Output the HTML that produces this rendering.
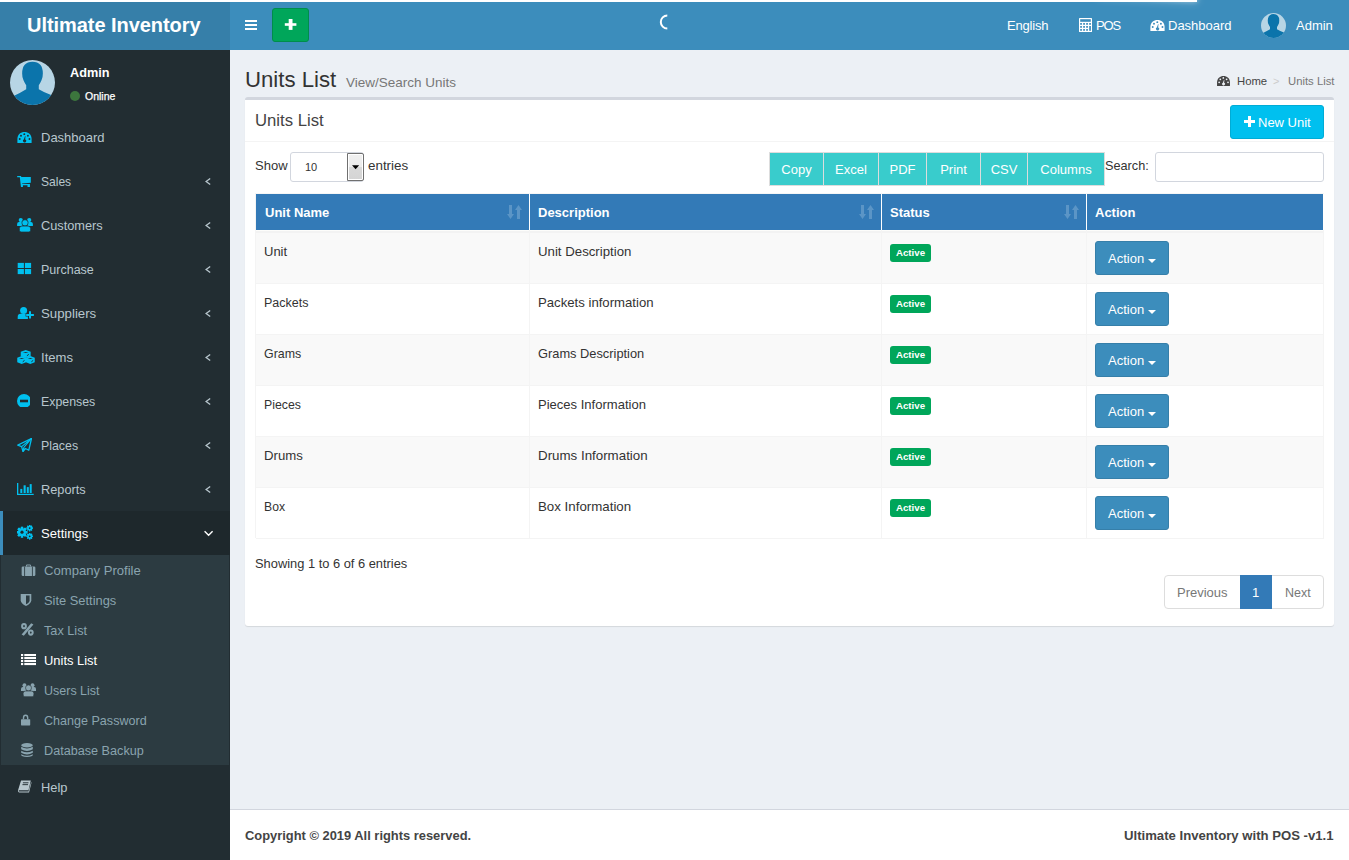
<!DOCTYPE html>
<html><head><meta charset="utf-8">
<style>
*{box-sizing:border-box;margin:0;padding:0}
html,body{width:1349px;height:860px;overflow:hidden;background:#ecf0f5}
body{font-family:"Liberation Sans",sans-serif;position:relative}
.t{position:absolute;line-height:20px;white-space:nowrap}
.i{position:absolute;line-height:0}
.i svg{display:block}
.r{position:absolute}
</style></head><body>
<div class="r" style="left:0px;top:50px;width:230px;height:810px;background:#222d32"></div>
<div class="r" style="left:230px;top:50px;width:1119px;height:759px;background:#ecf0f5"></div>
<div class="r" style="left:230px;top:809px;width:1119px;height:51px;background:#fff;border-top:1px solid #d2d6de"></div>
<div class="r" style="left:0px;top:0px;width:230px;height:50px;background:#367fa9"></div>
<div class="r" style="left:230px;top:0px;width:1119px;height:50px;background:#3c8dbc"></div>
<div class="t" style="left:27px;top:15px;font-size:20px;color:#fff;font-weight:bold;letter-spacing:-0.05px">Ultimate Inventory</div>
<div class="r" style="left:245px;top:20px;width:12px;height:2px;background:#fff"></div>
<div class="r" style="left:245px;top:24px;width:12px;height:2px;background:#fff"></div>
<div class="r" style="left:245px;top:28px;width:12px;height:2px;background:#fff"></div>
<div class="r" style="left:272px;top:8px;width:37px;height:34px;background:#00a65a;border:1px solid #008d4c;border-radius:3px"></div>
<div class="i" style="left:284px;top:18px"><svg width="14" height="14"><rect x="0.8" y="5.2" width="11.6" height="2.6" fill="#fff"/><rect x="4.7" y="1" width="3.8" height="10.9" fill="#fff"/></svg></div>
<div class="i" style="left:659px;top:14px"><svg width="12" height="16" viewBox="0 0 12 16"><path d="M8.3 1.5 A6.5 6.5 0 1 0 8.3 14.5" fill="none" stroke="#fff" stroke-width="2"/></svg></div>
<div class="t" style="left:1007px;top:16px;font-size:13px;color:#fff;letter-spacing:-0.2px">English</div>
<div class="i" style="left:1079px;top:18px;color:#fff"><svg width="13" height="14" viewBox="0 0 13 14" fill="currentColor"><rect x="0" y="0" width="13" height="14" rx="0.6"/><g fill="#3c8dbc"><rect x="1.2" y="1.2" width="10.6" height="2.6"/><rect x="1.2" y="5" width="1.7" height="1.8"/><rect x="4.2" y="5" width="1.7" height="1.8"/><rect x="7.2" y="5" width="1.7" height="1.8"/><rect x="10.2" y="5" width="1.7" height="1.8"/><rect x="1.2" y="8" width="1.7" height="1.8"/><rect x="4.2" y="8" width="1.7" height="1.8"/><rect x="7.2" y="8" width="1.7" height="1.8"/><rect x="1.2" y="11" width="1.7" height="1.8"/><rect x="4.2" y="11" width="1.7" height="1.8"/><rect x="7.2" y="11" width="1.7" height="1.8"/><rect x="10.2" y="8" width="1.7" height="4.8"/></g></svg></div>
<div class="t" style="left:1096px;top:16px;font-size:13px;color:#fff;letter-spacing:-1.2px">POS</div>
<div class="i" style="left:1150px;top:20px;color:#fff"><svg width="15" height="11" viewBox="0 0 14.6 11.3" fill="currentColor"><path d="M0 11.3 L0 7.2 C0 2.6 3.4 0 7.3 0 C11.2 0 14.6 2.6 14.6 7.2 L14.6 11.3Z"/><g fill="#3c8dbc"><circle cx="7.1" cy="2.2" r="1"/><circle cx="3.7" cy="3.8" r="1"/><circle cx="10.8" cy="3.8" r="1"/><circle cx="2.4" cy="7.1" r="1"/><circle cx="12.4" cy="7.1" r="1"/><path d="M7.9 4.2 L8.3 4.4 L8 7.6 A1.6 1.6 0 1 1 6.6 7.7Z"/></g></svg></div>
<div class="t" style="left:1168px;top:16px;font-size:13px;color:#fff;">Dashboard</div>
<div class="i" style="left:1261px;top:13px;color:#fff"><svg width="25" height="25" viewBox="0 0 100 100" fill="currentColor"><circle cx="50" cy="50" r="50" fill="#b7d5e5"/><clipPath id="cl25"><circle cx="50" cy="50" r="50"/></clipPath><g clip-path="url(#cl25)" fill="#0b74ab"><path d="M50 4 Q73 4 73 30 Q73 40 70 45 Q67 52 64 56 L64 65 Q75 72 94 79 L100 100 L0 100 L8 80 Q25 72 36 65 L36 56 Q33 52 30 45 Q27 40 27 30 Q27 4 50 4Z"/></g></svg></div>
<div class="t" style="left:1296px;top:16px;font-size:13px;color:#fff;">Admin</div>
<div class="r" style="left:0px;top:0px;width:1197px;height:2px;background:#fff;z-index:5"></div>
<div class="r" style="left:1097px;top:0px;width:100px;height:2px;box-shadow:0 0 10px #fff,0 0 5px #fff;transform:rotate(3deg) translate(0px,-4px);z-index:6"></div>
<div class="i" style="left:10px;top:60px;color:#fff"><svg width="45" height="45" viewBox="0 0 100 100" fill="currentColor"><circle cx="50" cy="50" r="50" fill="#b7d5e5"/><clipPath id="cl45"><circle cx="50" cy="50" r="50"/></clipPath><g clip-path="url(#cl45)" fill="#0b74ab"><path d="M50 4 Q73 4 73 30 Q73 40 70 45 Q67 52 64 56 L64 65 Q75 72 94 79 L100 100 L0 100 L8 80 Q25 72 36 65 L36 56 Q33 52 30 45 Q27 40 27 30 Q27 4 50 4Z"/></g></svg></div>
<div class="t" style="left:70px;top:63px;font-size:12.7px;color:#fff;font-weight:bold;">Admin</div>
<div class="r" style="left:70px;top:91px;width:10px;height:10px;background:#3c763d;border-radius:50%"></div>
<div class="t" style="left:85px;top:86px;font-size:10.5px;color:#fff;-webkit-text-stroke:0.25px #fff">Online</div>
<div class="t" style="left:41px;top:128px;font-size:13px;color:#b8c7ce;">Dashboard</div>
<div class="i" style="left:17px;top:132px;color:#00c0ef"><svg width="15" height="11" viewBox="0 0 14.6 11.3" fill="currentColor"><path d="M0 11.3 L0 7.2 C0 2.6 3.4 0 7.3 0 C11.2 0 14.6 2.6 14.6 7.2 L14.6 11.3Z"/><g fill="#222d32"><circle cx="7.1" cy="2.2" r="1"/><circle cx="3.7" cy="3.8" r="1"/><circle cx="10.8" cy="3.8" r="1"/><circle cx="2.4" cy="7.1" r="1"/><circle cx="12.4" cy="7.1" r="1"/><path d="M7.9 4.2 L8.3 4.4 L8 7.6 A1.6 1.6 0 1 1 6.6 7.7Z"/></g></svg></div>
<div class="t" style="left:41px;top:172px;font-size:12.05px;color:#b8c7ce;">Sales</div>
<div class="i" style="left:17px;top:176px;color:#00c0ef"><svg width="14" height="11" viewBox="0 0 14 11.3" fill="currentColor"><path d="M0 0 L3.9 0 L4.3 1 L14 1 L14 6.9 L5 7.6 L5.1 8.1 L13.1 8.1 L13.1 11.3 L10.6 11.3 L10.6 9.5 L5.9 9.5 L5.9 11.3 L3.9 11.3 L3.6 9 L2.7 1.3 L0 1.3Z"/></svg></div>
<div class="i" style="left:203px;top:176px"><svg width="9" height="11" viewBox="0 0 9 11"><path d="M7.2 2.4 L3.1 5.5 L7.2 8.6" fill="none" stroke="#b8c7ce" stroke-width="1.3"/></svg></div>
<div class="t" style="left:41px;top:216px;font-size:12.77px;color:#b8c7ce;">Customers</div>
<div class="i" style="left:17px;top:218px;color:#00c0ef"><svg width="16" height="14" viewBox="0 0 16 14.2" fill="currentColor"><circle cx="3.7" cy="2.1" r="2.1"/><circle cx="12.3" cy="2.1" r="2.1"/><path d="M0 8.2 L0 6 Q0 4 2 4 L5.5 4 L5.5 8.2Z"/><path d="M16 8.2 L16 6 Q16 4 14 4 L10.5 4 L10.5 8.2Z"/><circle cx="8" cy="4.9" r="3.2" stroke="#222d32" stroke-width="0.7"/><path d="M2.3 12.4 L2.3 10.6 Q2.3 8.2 4.8 8.2 L11.2 8.2 Q13.7 8.2 13.7 10.6 L13.7 12.4 Q13.7 14.2 12 14.2 L4 14.2 Q2.3 14.2 2.3 12.4Z" stroke="#222d32" stroke-width="0.7"/></svg></div>
<div class="i" style="left:203px;top:220px"><svg width="9" height="11" viewBox="0 0 9 11"><path d="M7.2 2.4 L3.1 5.5 L7.2 8.6" fill="none" stroke="#b8c7ce" stroke-width="1.3"/></svg></div>
<div class="t" style="left:41px;top:260px;font-size:12.5px;color:#b8c7ce;">Purchase</div>
<div class="i" style="left:17px;top:262px;color:#00c0ef"><svg width="15" height="13" viewBox="0 0 15 13" fill="currentColor"><rect x="0.7" y="0.9" width="6.2" height="5.1"/><rect x="7.9" y="0.9" width="6.2" height="5.1"/><rect x="0.7" y="7" width="6.2" height="5.1"/><rect x="7.9" y="7" width="6.2" height="5.1"/></svg></div>
<div class="i" style="left:203px;top:264px"><svg width="9" height="11" viewBox="0 0 9 11"><path d="M7.2 2.4 L3.1 5.5 L7.2 8.6" fill="none" stroke="#b8c7ce" stroke-width="1.3"/></svg></div>
<div class="t" style="left:41px;top:304px;font-size:13.26px;color:#b8c7ce;">Suppliers</div>
<div class="i" style="left:17px;top:306px;color:#00c0ef"><svg width="17" height="13" viewBox="0 0 17 13" fill="currentColor"><circle cx="6.6" cy="4.5" r="3.5"/><path d="M0.7 13 L0.7 11 Q0.7 7.8 3.7 7.8 L9.2 7.8 Q10.7 7.8 10.9 9 L10.9 13Z"/><path d="M12 5.2 L14 5.2 L14 8 L16.9 8 L16.9 10 L14 10 L14 12.6 L12 12.6 L12 10 L9.2 10 L9.2 8 L12 8Z" fill="#222d32" stroke="#222d32" stroke-width="1.2"/><path d="M12 5.2 L14 5.2 L14 8 L16.9 8 L16.9 10 L14 10 L14 12.6 L12 12.6 L12 10 L9.2 10 L9.2 8 L12 8Z"/></svg></div>
<div class="i" style="left:203px;top:308px"><svg width="9" height="11" viewBox="0 0 9 11"><path d="M7.2 2.4 L3.1 5.5 L7.2 8.6" fill="none" stroke="#b8c7ce" stroke-width="1.3"/></svg></div>
<div class="t" style="left:41px;top:348px;font-size:13.1px;color:#b8c7ce;">Items</div>
<div class="i" style="left:17px;top:350px;color:#00c0ef"><svg width="18" height="14" viewBox="0 0 18 14.4" fill="currentColor"><polygon points="8.7,0 13.799999999999999,1.8039999999999998 13.799999999999999,6.396 8.7,8.2 3.6,6.396 3.6,1.8039999999999998"/><path d="M5.640000000000001 1.9679999999999997 L11.76 1.9679999999999997 L8.7 3.1159999999999997Z" fill="#222d32"/><path d="M9.924 5.903999999999999 L11.963999999999999 4.51" stroke="#222d32" stroke-width="1"/><polygon points="4.55,6.2 9.1,8.004 9.1,12.596 4.55,14.399999999999999 0,12.596 0,8.004"/><path d="M1.82 8.168 L7.28 8.168 L4.55 9.315999999999999Z" fill="#222d32"/><path d="M5.6419999999999995 12.104 L7.461999999999999 10.71" stroke="#222d32" stroke-width="1"/><polygon points="13.45,6.2 18.0,8.004 18.0,12.596 13.45,14.399999999999999 8.9,12.596 8.9,8.004"/><path d="M10.72 8.168 L16.18 8.168 L13.45 9.315999999999999Z" fill="#222d32"/><path d="M14.542 12.104 L16.362 10.71" stroke="#222d32" stroke-width="1"/></svg></div>
<div class="i" style="left:203px;top:352px"><svg width="9" height="11" viewBox="0 0 9 11"><path d="M7.2 2.4 L3.1 5.5 L7.2 8.6" fill="none" stroke="#b8c7ce" stroke-width="1.3"/></svg></div>
<div class="t" style="left:41px;top:392px;font-size:12.36px;color:#b8c7ce;">Expenses</div>
<div class="i" style="left:17px;top:394px;color:#00c0ef"><svg width="13" height="13" viewBox="0 0 13 13" fill="currentColor"><circle cx="7" cy="7" r="7"/><rect x="3" y="5.7" width="8" height="2.6" fill="#222d32"/></svg></div>
<div class="i" style="left:203px;top:396px"><svg width="9" height="11" viewBox="0 0 9 11"><path d="M7.2 2.4 L3.1 5.5 L7.2 8.6" fill="none" stroke="#b8c7ce" stroke-width="1.3"/></svg></div>
<div class="t" style="left:41px;top:436px;font-size:12.37px;color:#b8c7ce;">Places</div>
<div class="i" style="left:17px;top:438px;color:#00c0ef"><svg width="15" height="14" viewBox="0 0 15 14" fill="currentColor"><path d="M14.5 0.5 L0.8 7.2 L4.6 8.6 L6 13.5 L8.3 10.5 L11.8 12.2Z" fill="none" stroke="currentColor" stroke-width="1.3" stroke-linejoin="round"/><path d="M14.5 0.5 L4.6 8.6 M14.5 0.5 L6.8 9.5 L6 13.5" fill="none" stroke="currentColor" stroke-width="1.1"/></svg></div>
<div class="i" style="left:203px;top:440px"><svg width="9" height="11" viewBox="0 0 9 11"><path d="M7.2 2.4 L3.1 5.5 L7.2 8.6" fill="none" stroke="#b8c7ce" stroke-width="1.3"/></svg></div>
<div class="t" style="left:41px;top:480px;font-size:12.77px;color:#b8c7ce;">Reports</div>
<div class="i" style="left:17px;top:483px;color:#00c0ef"><svg width="17" height="12" viewBox="0 0 17 12" fill="currentColor"><rect x="0" y="0" width="1.3" height="12"/><rect x="0" y="10.8" width="16.7" height="1.2"/><rect x="3.3" y="5.9" width="2" height="4.1"/><rect x="6.6" y="2.3" width="2.1" height="7.7"/><rect x="9.8" y="4.1" width="2" height="5.9"/><rect x="12.7" y="1.1" width="2" height="8.9"/></svg></div>
<div class="i" style="left:203px;top:484px"><svg width="9" height="11" viewBox="0 0 9 11"><path d="M7.2 2.4 L3.1 5.5 L7.2 8.6" fill="none" stroke="#b8c7ce" stroke-width="1.3"/></svg></div>
<div class="r" style="left:0px;top:511px;width:230px;height:44px;background:#1e282c"></div>
<div class="r" style="left:0px;top:511px;width:3px;height:44px;background:#3c8dbc"></div>
<div class="t" style="left:41px;top:524px;font-size:13.08px;color:#fff;">Settings</div>
<div class="i" style="left:17px;top:525px;color:#00c0ef"><svg width="16" height="15" viewBox="0 0 16 15" fill="currentColor"><rect x="3.85" y="1.8180000000000005" width="2.3" height="10.764" transform="rotate(0.0 5 7.2)"/><rect x="3.85" y="1.8180000000000005" width="2.3" height="10.764" transform="rotate(45.0 5 7.2)"/><rect x="3.85" y="1.8180000000000005" width="2.3" height="10.764" transform="rotate(90.0 5 7.2)"/><rect x="3.85" y="1.8180000000000005" width="2.3" height="10.764" transform="rotate(135.0 5 7.2)"/><rect x="3.85" y="1.8180000000000005" width="2.3" height="10.764" transform="rotate(180.0 5 7.2)"/><rect x="3.85" y="1.8180000000000005" width="2.3" height="10.764" transform="rotate(225.0 5 7.2)"/><rect x="3.85" y="1.8180000000000005" width="2.3" height="10.764" transform="rotate(270.0 5 7.2)"/><rect x="3.85" y="1.8180000000000005" width="2.3" height="10.764" transform="rotate(315.0 5 7.2)"/><circle cx="5" cy="7.2" r="3.9"/><circle cx="5" cy="7.2" r="1.6" fill="#1e282c"/><rect x="12.049999999999999" y="-0.0739999999999994" width="1.3" height="6.347999999999999" transform="rotate(0.0 12.7 3.1)"/><rect x="12.049999999999999" y="-0.0739999999999994" width="1.3" height="6.347999999999999" transform="rotate(45.0 12.7 3.1)"/><rect x="12.049999999999999" y="-0.0739999999999994" width="1.3" height="6.347999999999999" transform="rotate(90.0 12.7 3.1)"/><rect x="12.049999999999999" y="-0.0739999999999994" width="1.3" height="6.347999999999999" transform="rotate(135.0 12.7 3.1)"/><rect x="12.049999999999999" y="-0.0739999999999994" width="1.3" height="6.347999999999999" transform="rotate(180.0 12.7 3.1)"/><rect x="12.049999999999999" y="-0.0739999999999994" width="1.3" height="6.347999999999999" transform="rotate(225.0 12.7 3.1)"/><rect x="12.049999999999999" y="-0.0739999999999994" width="1.3" height="6.347999999999999" transform="rotate(270.0 12.7 3.1)"/><rect x="12.049999999999999" y="-0.0739999999999994" width="1.3" height="6.347999999999999" transform="rotate(315.0 12.7 3.1)"/><circle cx="12.7" cy="3.1" r="2.3"/><circle cx="12.7" cy="3.1" r="0.9" fill="#1e282c"/><rect x="12.049999999999999" y="8.126000000000001" width="1.3" height="6.347999999999999" transform="rotate(0.0 12.7 11.3)"/><rect x="12.049999999999999" y="8.126000000000001" width="1.3" height="6.347999999999999" transform="rotate(45.0 12.7 11.3)"/><rect x="12.049999999999999" y="8.126000000000001" width="1.3" height="6.347999999999999" transform="rotate(90.0 12.7 11.3)"/><rect x="12.049999999999999" y="8.126000000000001" width="1.3" height="6.347999999999999" transform="rotate(135.0 12.7 11.3)"/><rect x="12.049999999999999" y="8.126000000000001" width="1.3" height="6.347999999999999" transform="rotate(180.0 12.7 11.3)"/><rect x="12.049999999999999" y="8.126000000000001" width="1.3" height="6.347999999999999" transform="rotate(225.0 12.7 11.3)"/><rect x="12.049999999999999" y="8.126000000000001" width="1.3" height="6.347999999999999" transform="rotate(270.0 12.7 11.3)"/><rect x="12.049999999999999" y="8.126000000000001" width="1.3" height="6.347999999999999" transform="rotate(315.0 12.7 11.3)"/><circle cx="12.7" cy="11.3" r="2.3"/><circle cx="12.7" cy="11.3" r="0.9" fill="#1e282c"/></svg></div>
<div class="i" style="left:203px;top:529px"><svg width="11" height="8" viewBox="0 0 11 8"><path d="M1.6 2.3 L5.6 6.3 L9.6 2.3" fill="none" stroke="#fff" stroke-width="1.4"/></svg></div>
<div class="r" style="left:1px;top:555px;width:228px;height:210px;background:#2c3b41"></div>
<div class="t" style="left:44px;top:561px;font-size:13.1px;color:#8aa4af;">Company Profile</div>
<div class="i" style="left:21px;top:564px;color:#8aa4af"><svg width="15" height="12" viewBox="0 0 16 14" fill="currentColor"><path d="M5 2 Q5 0.5 6.5 0.5 L9.5 0.5 Q11 0.5 11 2 L11 3 L9.8 3 L9.8 1.8 L6.2 1.8 L6.2 3 L5 3Z"/><rect x="0" y="3" width="16" height="11" rx="1.5"/><rect x="3" y="3" width="1" height="11" fill="#2c3b41"/><rect x="12" y="3" width="1" height="11" fill="#2c3b41"/></svg></div>
<div class="t" style="left:44px;top:591px;font-size:12.88px;color:#8aa4af;">Site Settings</div>
<div class="i" style="left:20px;top:593px;color:#8aa4af"><svg width="12" height="13" viewBox="0 0 12 13" fill="currentColor"><path d="M0.7 1 L11.3 1 L11.3 7.2 Q11.3 10.5 6 13 Q0.7 10.5 0.7 7.2Z"/><path d="M6 2.6 L9.6 2.6 L9.6 7.2 Q9.6 9.6 6 11.2Z" fill="#2c3b41"/></svg></div>
<div class="t" style="left:44px;top:621px;font-size:12.7px;color:#8aa4af;">Tax List</div>
<div class="i" style="left:21px;top:623px;color:#8aa4af"><svg width="13" height="13" viewBox="0 0 13 13" fill="currentColor"><ellipse cx="3" cy="3.2" rx="1.9" ry="2.1" fill="none" stroke="currentColor" stroke-width="2"/><ellipse cx="9.8" cy="9.6" rx="1.9" ry="2.1" fill="none" stroke="currentColor" stroke-width="2"/><path d="M10.2 0.3 L12.4 1.6 L2.8 12.7 L0.6 11.4Z"/></svg></div>
<div class="t" style="left:44px;top:651px;font-size:12.93px;color:#fff;">Units List</div>
<div class="i" style="left:21px;top:654px;color:#fff"><svg width="15" height="12" viewBox="0 0 15 12" fill="currentColor"><rect x="0" y="0" width="2.2" height="2.1"/><rect x="3.3" y="0" width="11.7" height="2.1"/><rect x="0" y="3" width="2.2" height="2.1"/><rect x="3.3" y="3" width="11.7" height="2.1"/><rect x="0" y="6" width="2.2" height="2.1"/><rect x="3.3" y="6" width="11.7" height="2.1"/><rect x="0" y="9" width="2.2" height="2.1"/><rect x="3.3" y="9" width="11.7" height="2.1"/></svg></div>
<div class="t" style="left:44px;top:681px;font-size:12.5px;color:#8aa4af;">Users List</div>
<div class="i" style="left:21px;top:683px;color:#8aa4af"><svg width="15" height="14" viewBox="0 0 16 14.2" fill="currentColor"><circle cx="3.7" cy="2.1" r="2.1"/><circle cx="12.3" cy="2.1" r="2.1"/><path d="M0 8.2 L0 6 Q0 4 2 4 L5.5 4 L5.5 8.2Z"/><path d="M16 8.2 L16 6 Q16 4 14 4 L10.5 4 L10.5 8.2Z"/><circle cx="8" cy="4.9" r="3.2" stroke="#2c3b41" stroke-width="0.7"/><path d="M2.3 12.4 L2.3 10.6 Q2.3 8.2 4.8 8.2 L11.2 8.2 Q13.7 8.2 13.7 10.6 L13.7 12.4 Q13.7 14.2 12 14.2 L4 14.2 Q2.3 14.2 2.3 12.4Z" stroke="#2c3b41" stroke-width="0.7"/></svg></div>
<div class="t" style="left:44px;top:711px;font-size:12.57px;color:#8aa4af;">Change Password</div>
<div class="i" style="left:21px;top:714px;color:#8aa4af"><svg width="10" height="12" viewBox="0 0 10 12" fill="currentColor"><path d="M1.8 5.3 L1.8 4 Q1.8 0.6 4.6 0.6 Q7.4 0.6 7.4 4 L7.4 5.3 L6 5.3 L6 4 Q6 2 4.6 2 Q3.2 2 3.2 4 L3.2 5.3Z"/><rect x="0" y="5.2" width="9.2" height="6.2" rx="0.6"/></svg></div>
<div class="t" style="left:44px;top:741px;font-size:12.65px;color:#8aa4af;">Database Backup</div>
<div class="i" style="left:21px;top:743px;color:#8aa4af"><svg width="12" height="14" viewBox="0 0 12 14.5" fill="currentColor"><ellipse cx="6" cy="2.3" rx="6" ry="2.3"/><path d="M0 4 Q6 7.2 12 4 L12 6.6 Q6 9.8 0 6.6Z"/><path d="M0 8 Q6 11.2 12 8 L12 10.2 Q6 13.4 0 10.2Z"/><path d="M0 11.6 Q6 14.8 12 11.6 L12 12.4 Q12 14.2 6 14.4 Q0 14.2 0 12.4Z"/></svg></div>
<div class="t" style="left:41px;top:778px;font-size:12.86px;color:#b8c7ce;">Help</div>
<div class="i" style="left:18px;top:780px;color:#b8c7ce"><svg width="14" height="13" viewBox="0 0 14.5 14" fill="currentColor"><path d="M3 0.5 L13.5 0.5 L11 11 L1 11 Q0.2 11.5 0.8 12.3 L11 12.3 L13.8 2.5 L14.3 2.8 L11.6 13.5 L1 13.5 Q-0.8 13 0 10.3Z" fill="currentColor"/><path d="M5 3 L11 3 M4.5 5 L10.5 5" stroke="#222d32" stroke-width="1"/></svg></div>
<div class="t" style="left:245px;top:70px;font-size:22.2px;color:#333;">Units List</div>
<div class="t" style="left:346px;top:73px;font-size:13.5px;color:#777;">View/Search Units</div>
<div class="i" style="left:1217px;top:76px;color:#444"><svg width="13" height="10" viewBox="0 0 14.6 11.3" fill="currentColor"><path d="M0 11.3 L0 7.2 C0 2.6 3.4 0 7.3 0 C11.2 0 14.6 2.6 14.6 7.2 L14.6 11.3Z"/><g fill="#ecf0f5"><circle cx="7.1" cy="2.2" r="1"/><circle cx="3.7" cy="3.8" r="1"/><circle cx="10.8" cy="3.8" r="1"/><circle cx="2.4" cy="7.1" r="1"/><circle cx="12.4" cy="7.1" r="1"/><path d="M7.9 4.2 L8.3 4.4 L8 7.6 A1.6 1.6 0 1 1 6.6 7.7Z"/></g></svg></div>
<div class="t" style="left:1237px;top:71px;font-size:11.3px;color:#444;">Home</div>
<div class="t" style="left:1273px;top:71px;font-size:11px;color:#ccc;">&gt;</div>
<div class="t" style="left:1288px;top:71px;font-size:11.3px;color:#777;">Units List</div>
<div class="r" style="left:245px;top:97px;width:1089px;height:529px;background:#fff;border-top:3px solid #d2d6de;border-radius:3px;box-shadow:0 1px 1px rgba(0,0,0,.1)"></div>
<div class="r" style="left:245px;top:141px;width:1089px;height:1px;background:#f4f4f4"></div>
<div class="t" style="left:255px;top:111px;font-size:16.7px;color:#444;">Units List</div>
<div class="r" style="left:1230px;top:105px;width:94px;height:34px;background:#00c0ef;border:1px solid #00acd6;border-radius:3px"></div>
<div class="r" style="left:1244px;top:120px;width:11px;height:3px;background:#fff"></div>
<div class="r" style="left:1248px;top:116px;width:3px;height:11px;background:#fff"></div>
<div class="t" style="left:1258px;top:113px;font-size:13px;color:#fff;">New Unit</div>
<div class="t" style="left:255px;top:156px;font-size:13px;color:#333;">Show</div>
<div class="r" style="left:290px;top:152px;width:74px;height:30px;background:#fff;border:1px solid #d2d6de;border-radius:3px"></div>
<div class="r" style="left:347px;top:153px;width:17px;height:28px;background:linear-gradient(#f0f0f0,#ececec 48%,#d9d9d9 52%,#d4d4d4);border:1px solid #707070;box-shadow:inset 0 0 0 1px #fff;border-radius:0 2px 2px 0"></div>
<div class="i" style="left:352px;top:165px"><svg width="8" height="5"><path d="M0 0.2 L7.2 0.2 L3.6 4.2Z" fill="#000"/></svg></div>
<div class="t" style="left:305px;top:157px;font-size:11px;color:#333;">10</div>
<div class="t" style="left:368px;top:156px;font-size:13.4px;color:#333;">entries</div>
<div class="r" style="left:769px;top:152px;width:336px;height:34px;background:#39cccc;border:1px solid #ddd"></div>
<div class="t" style="left:770px;top:160px;width:53px;text-align:center;font-size:13px;color:#fff">Copy</div>
<div class="r" style="left:823px;top:152px;width:1px;height:34px;background:#ddd"></div>
<div class="t" style="left:824px;top:160px;width:54px;text-align:center;font-size:13px;color:#fff">Excel</div>
<div class="r" style="left:878px;top:152px;width:1px;height:34px;background:#ddd"></div>
<div class="t" style="left:879px;top:160px;width:47px;text-align:center;font-size:13px;color:#fff">PDF</div>
<div class="r" style="left:926px;top:152px;width:1px;height:34px;background:#ddd"></div>
<div class="t" style="left:927px;top:160px;width:53px;text-align:center;font-size:13px;color:#fff">Print</div>
<div class="r" style="left:980px;top:152px;width:1px;height:34px;background:#ddd"></div>
<div class="t" style="left:981px;top:160px;width:46px;text-align:center;font-size:13px;color:#fff">CSV</div>
<div class="r" style="left:1027px;top:152px;width:1px;height:34px;background:#ddd"></div>
<div class="t" style="left:1028px;top:160px;width:76px;text-align:center;font-size:13px;color:#fff">Columns</div>
<div class="t" style="left:1105px;top:156px;font-size:12.7px;color:#333;">Search:</div>
<div class="r" style="left:1155px;top:152px;width:169px;height:30px;background:#fff;border:1px solid #d2d6de;border-radius:3px"></div>
<div class="r" style="left:255px;top:193px;width:1069px;height:1px;background:#f6f6f6"></div>
<div class="r" style="left:256px;top:194px;width:1067px;height:36px;background:#337ab7"></div>
<div class="r" style="left:529px;top:194px;width:1px;height:36px;background:#fff"></div>
<div class="r" style="left:881px;top:194px;width:1px;height:36px;background:#fff"></div>
<div class="r" style="left:1086px;top:194px;width:1px;height:36px;background:#fff"></div>
<div class="t" style="left:265px;top:203px;font-size:13px;color:#fff;font-weight:bold;">Unit Name</div>
<div class="t" style="left:538px;top:203px;font-size:13px;color:#fff;font-weight:bold;">Description</div>
<div class="t" style="left:890px;top:203px;font-size:13px;color:#fff;font-weight:bold;">Status</div>
<div class="t" style="left:1095px;top:203px;font-size:13px;color:#fff;font-weight:bold;">Action</div>
<div class="i" style="left:507px;top:205px;color:#fff"><svg width="15" height="14" viewBox="0 0 15 14"><path d="M2 0 L5 0 L5 9 L7 9 L3.5 14 L0 9 L2 9Z M10 14 L13 14 L13 5 L15 5 L11.5 0 L8 5 L10 5Z" fill="#5b95c6"/></svg></div>
<div class="i" style="left:859px;top:205px;color:#fff"><svg width="15" height="14" viewBox="0 0 15 14"><path d="M2 0 L5 0 L5 9 L7 9 L3.5 14 L0 9 L2 9Z M10 14 L13 14 L13 5 L15 5 L11.5 0 L8 5 L10 5Z" fill="#5b95c6"/></svg></div>
<div class="i" style="left:1064px;top:205px;color:#fff"><svg width="15" height="14" viewBox="0 0 15 14"><path d="M2 0 L5 0 L5 9 L7 9 L3.5 14 L0 9 L2 9Z M10 14 L13 14 L13 5 L15 5 L11.5 0 L8 5 L10 5Z" fill="#5b95c6"/></svg></div>
<div class="r" style="left:256px;top:230px;width:1068px;height:54px;background:#f9f9f9"></div>
<div class="r" style="left:256px;top:283px;width:1068px;height:1px;background:#f4f4f4"></div>
<div class="t" style="left:264px;top:242px;font-size:13px;color:#333;">Unit</div>
<div class="t" style="left:538px;top:242px;font-size:13.24px;color:#333;">Unit Description</div>
<div class="r" style="left:890px;top:244px;width:41px;height:18px;background:#00a65a;border-radius:3px"></div>
<div class="t" style="left:890px;top:243px;width:41px;text-align:center;font-size:9.7px;font-weight:bold;color:#fff">Active</div>
<div class="r" style="left:1095px;top:241px;width:74px;height:34px;background:#3c8dbc;border:1px solid #367fa9;border-radius:3px"></div>
<div class="t" style="left:1108px;top:249px;font-size:13px;color:#fff;">Action</div>
<div class="i" style="left:1148px;top:259px"><svg width="8" height="4"><path d="M0 0 L8 0 L4 4Z" fill="#fff"/></svg></div>
<div class="r" style="left:256px;top:284px;width:1068px;height:51px;background:#fff"></div>
<div class="r" style="left:256px;top:334px;width:1068px;height:1px;background:#f4f4f4"></div>
<div class="t" style="left:264px;top:293px;font-size:12.5px;color:#333;">Packets</div>
<div class="t" style="left:538px;top:293px;font-size:13.17px;color:#333;">Packets information</div>
<div class="r" style="left:890px;top:295px;width:41px;height:18px;background:#00a65a;border-radius:3px"></div>
<div class="t" style="left:890px;top:294px;width:41px;text-align:center;font-size:9.7px;font-weight:bold;color:#fff">Active</div>
<div class="r" style="left:1095px;top:292px;width:74px;height:34px;background:#3c8dbc;border:1px solid #367fa9;border-radius:3px"></div>
<div class="t" style="left:1108px;top:300px;font-size:13px;color:#fff;">Action</div>
<div class="i" style="left:1148px;top:310px"><svg width="8" height="4"><path d="M0 0 L8 0 L4 4Z" fill="#fff"/></svg></div>
<div class="r" style="left:256px;top:335px;width:1068px;height:51px;background:#f9f9f9"></div>
<div class="r" style="left:256px;top:385px;width:1068px;height:1px;background:#f4f4f4"></div>
<div class="t" style="left:264px;top:344px;font-size:12.4px;color:#333;">Grams</div>
<div class="t" style="left:538px;top:344px;font-size:12.84px;color:#333;">Grams Description</div>
<div class="r" style="left:890px;top:346px;width:41px;height:18px;background:#00a65a;border-radius:3px"></div>
<div class="t" style="left:890px;top:345px;width:41px;text-align:center;font-size:9.7px;font-weight:bold;color:#fff">Active</div>
<div class="r" style="left:1095px;top:343px;width:74px;height:34px;background:#3c8dbc;border:1px solid #367fa9;border-radius:3px"></div>
<div class="t" style="left:1108px;top:351px;font-size:13px;color:#fff;">Action</div>
<div class="i" style="left:1148px;top:361px"><svg width="8" height="4"><path d="M0 0 L8 0 L4 4Z" fill="#fff"/></svg></div>
<div class="r" style="left:256px;top:386px;width:1068px;height:51px;background:#fff"></div>
<div class="r" style="left:256px;top:436px;width:1068px;height:1px;background:#f4f4f4"></div>
<div class="t" style="left:264px;top:395px;font-size:12.3px;color:#333;">Pieces</div>
<div class="t" style="left:538px;top:395px;font-size:13.04px;color:#333;">Pieces Information</div>
<div class="r" style="left:890px;top:397px;width:41px;height:18px;background:#00a65a;border-radius:3px"></div>
<div class="t" style="left:890px;top:396px;width:41px;text-align:center;font-size:9.7px;font-weight:bold;color:#fff">Active</div>
<div class="r" style="left:1095px;top:394px;width:74px;height:34px;background:#3c8dbc;border:1px solid #367fa9;border-radius:3px"></div>
<div class="t" style="left:1108px;top:402px;font-size:13px;color:#fff;">Action</div>
<div class="i" style="left:1148px;top:412px"><svg width="8" height="4"><path d="M0 0 L8 0 L4 4Z" fill="#fff"/></svg></div>
<div class="r" style="left:256px;top:437px;width:1068px;height:51px;background:#f9f9f9"></div>
<div class="r" style="left:256px;top:487px;width:1068px;height:1px;background:#f4f4f4"></div>
<div class="t" style="left:264px;top:446px;font-size:13.2px;color:#333;">Drums</div>
<div class="t" style="left:538px;top:446px;font-size:13.33px;color:#333;">Drums Information</div>
<div class="r" style="left:890px;top:448px;width:41px;height:18px;background:#00a65a;border-radius:3px"></div>
<div class="t" style="left:890px;top:447px;width:41px;text-align:center;font-size:9.7px;font-weight:bold;color:#fff">Active</div>
<div class="r" style="left:1095px;top:445px;width:74px;height:34px;background:#3c8dbc;border:1px solid #367fa9;border-radius:3px"></div>
<div class="t" style="left:1108px;top:453px;font-size:13px;color:#fff;">Action</div>
<div class="i" style="left:1148px;top:463px"><svg width="8" height="4"><path d="M0 0 L8 0 L4 4Z" fill="#fff"/></svg></div>
<div class="r" style="left:256px;top:488px;width:1068px;height:51px;background:#fff"></div>
<div class="r" style="left:256px;top:538px;width:1068px;height:1px;background:#f4f4f4"></div>
<div class="t" style="left:264px;top:497px;font-size:12.2px;color:#333;">Box</div>
<div class="t" style="left:538px;top:497px;font-size:13.3px;color:#333;">Box Information</div>
<div class="r" style="left:890px;top:499px;width:41px;height:18px;background:#00a65a;border-radius:3px"></div>
<div class="t" style="left:890px;top:498px;width:41px;text-align:center;font-size:9.7px;font-weight:bold;color:#fff">Active</div>
<div class="r" style="left:1095px;top:496px;width:74px;height:34px;background:#3c8dbc;border:1px solid #367fa9;border-radius:3px"></div>
<div class="t" style="left:1108px;top:504px;font-size:13px;color:#fff;">Action</div>
<div class="i" style="left:1148px;top:514px"><svg width="8" height="4"><path d="M0 0 L8 0 L4 4Z" fill="#fff"/></svg></div>
<div class="r" style="left:256px;top:230px;width:1067px;height:1px;background:#fdfdfb"></div>
<div class="r" style="left:256px;top:231px;width:1067px;height:2px;background:#f3f3f3"></div>
<div class="r" style="left:255px;top:193px;width:1px;height:345px;background:#f4f4f4"></div>
<div class="r" style="left:1323px;top:230px;width:1px;height:308px;background:#f4f4f4"></div>
<div class="r" style="left:529px;top:230px;width:1px;height:308px;background:#f4f4f4"></div>
<div class="r" style="left:881px;top:230px;width:1px;height:308px;background:#f4f4f4"></div>
<div class="r" style="left:1086px;top:230px;width:1px;height:308px;background:#f4f4f4"></div>
<div class="t" style="left:255px;top:554px;font-size:12.86px;color:#333;">Showing 1 to 6 of 6 entries</div>
<div class="r" style="left:1164px;top:575px;width:160px;height:34px;background:#fff;border:1px solid #ddd;border-radius:4px"></div>
<div class="r" style="left:1240px;top:575px;width:32px;height:34px;background:#337ab7"></div>
<div class="t" style="left:1177px;top:583px;font-size:13px;color:#777;">Previous</div>
<div class="t" style="left:1252px;top:583px;font-size:13px;color:#fff;">1</div>
<div class="t" style="left:1285px;top:583px;font-size:12.5px;color:#777;">Next</div>
<div class="t" style="left:245px;top:826px;font-size:12.9px;color:#444;font-weight:bold;">Copyright © 2019 All rights reserved.</div>
<div class="t" style="left:1124px;top:826px;font-size:13.15px;color:#444;font-weight:bold;">Ultimate Inventory with POS -v1.1</div>
</body></html>
